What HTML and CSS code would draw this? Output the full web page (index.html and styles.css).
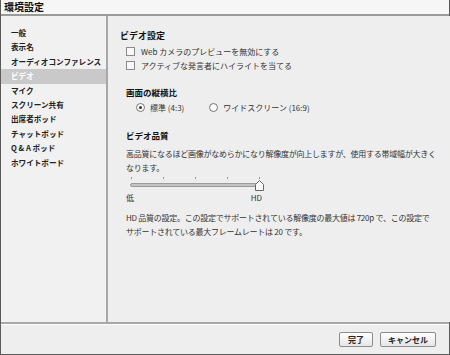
FILE: index.html
```html
<!DOCTYPE html>
<html lang="ja">
<head>
    <meta charset="UTF-8" />
    <link rel="stylesheet" href="styles.css">
</head>
<body>
    <div class="window">
        <div class="titlebar">環境設定</div>

        <div class="main">
            <ul class="sidebar">
                <li>一般</li>
                <li>表示名</li>
                <li>オーディオコンファレンス</li>
                <li class="selected">ビデオ</li>
                <li>マイク</li>
                <li>スクリーン共有</li>
                <li>出席者ポッド</li>
                <li>チャットポッド</li>
                <li>Q &amp; A ポッド</li>
                <li>ホワイトボード</li>
            </ul>

            <div class="content">
                <h2 class="heading">ビデオ設定</h2>
                <div class="section">
                    <label class="option"><span class="check"></span>Web カメラのプレビューを無効にする</label>
                    <label class="option"><span class="check"></span>アクティブな発言者にハイライトを当てる</label>
                </div>

                <div class="section gap">
                    <h3 class="subheading">画面の縦横比</h3>
                    <div class="radio-row">
                        <label class="option"><span class="radio on"></span>標準 (4:3)</label>
                        <label class="option"><span class="radio"></span>ワイドスクリーン (16:9)</label>
                    </div>
                </div>

                <div class="section gap wide">
                    <h3 class="subheading">ビデオ品質</h3>
                    <p class="desc">高品質になるほど画像がなめらかになり解像度が向上しますが、使用する帯域幅が大きくなります。</p>

                    <div class="slider">
                        <div class="ticks">
                            <span></span><span></span><span></span><span></span><span></span>
                        </div>
                        <div class="track"></div>
                        <svg class="thumb" width="9" height="11" viewBox="0 0 9 11">
                            <path d="M0.5 10.5 V4.5 L4.5 0.5 L8.5 4.5 V10.5 Z" fill="#fafafa" stroke="#666" />
                        </svg>
                        <div class="slider-labels">
                            <span>低</span><span>HD</span>
                        </div>
                    </div>

                    <p class="desc note">HD 品質の設定。この設定でサポートされている解像度の最大値は 720p で、この設定でサポートされている最大フレームレートは 20 です。</p>
                </div>
            </div>
        </div>

        <div class="footer">
            <button class="btn ok">完了</button>
            <button class="btn cancel">キャンセル</button>
        </div>
    </div>
</body>
</html>
```

FILE: styles.css
```css
html, body {
    margin: 0;
    padding: 0;
}
body {
    font-family: "Noto Sans CJK JP", "Liberation Sans", sans-serif;
    font-size: 8px;
    color: #333333;
    background: #eeeeee;
}

.window {
    width: 450px;
    height: 355px;
    box-sizing: border-box;
    border-left: 1px solid #5a5a5a;
    border-right: 1px solid #5a5a5a;
    border-bottom: 1px solid #5a5a5a;
    display: flex;
    flex-direction: column;
    background: #eeeeee;
}

.titlebar {
    height: 14px;
    line-height: 14px;
    padding-left: 3px;
    font-size: 10px;
    font-weight: bold;
    color: #111111;
    background: #f6f6f6;
    border-bottom: 2px solid #9a9a9a;
    box-shadow: 0 1px 0 #ffffff;
}

.main {
    flex: 1;
    display: flex;
    min-height: 0;
}

.sidebar {
    flex: none;
    list-style: none;
    margin: 0;
    padding: 10px 0 0 0;
    width: 105px;
    background: #f1f1f1;
    border-right: 2px solid #a8a8a8;
    box-shadow: 1px 0 0 #ffffff;
}
.sidebar li {
    height: 14.4px;
    line-height: 14.4px;
    padding-left: 10px;
    font-size: 7.6px;
    font-weight: bold;
    color: #222222;
    white-space: nowrap;
}
.sidebar li.selected {
    background: #c9c9c9;
    color: #ffffff;
}

.content {
    flex: 1;
    padding: 14px 12px 0 12px;
    background: #eeeeee;
}

.heading {
    margin: 0;
    font-size: 9px;
    line-height: 12px;
    font-weight: bold;
    color: #111111;
}
.section {
    margin-left: 6px;
}
.section.gap {
    margin-top: 14px;
}
.section.wide {
    margin-top: 15px;
}
.subheading {
    margin: 0;
    font-size: 8.5px;
    line-height: 12px;
    font-weight: bold;
    color: #111111;
}

.option {
    display: flex;
    align-items: center;
    height: 14px;
    white-space: nowrap;
}
.section > .option:first-child {
    margin-top: 2px;
}

.check {
    width: 7px;
    height: 7px;
    border: 1px solid #8a8a8a;
    background: #f8f8f8;
    margin-right: 6px;
}

.radio-row {
    display: flex;
    gap: 25px;
    margin-top: 2px;
    padding-left: 10px;
}
.radio {
    position: relative;
    width: 7px;
    height: 7px;
    border: 1px solid #777777;
    border-radius: 50%;
    background: #fafafa;
    margin-right: 5px;
}
.radio.on::after {
    content: "";
    position: absolute;
    top: 2px;
    left: 2px;
    width: 3px;
    height: 3px;
    border-radius: 50%;
    background: #333333;
}

.desc {
    margin: 6px 0 0 0;
    line-height: 13.5px;
    width: 314px;
    letter-spacing: -0.25px;
}
.desc.note {
    margin-top: 7px;
    width: 307px;
}

.slider {
    position: relative;
    width: 136px;
    margin-top: 3px;
}
.ticks {
    display: flex;
    justify-content: space-between;
    width: 129px;
    margin-left: 5px;
    height: 4px;
}
.ticks span {
    width: 1px;
    height: 2px;
    background: #999999;
}
.track {
    margin: 2px 0 0 4px;
    width: 128px;
    height: 2px;
    border: 1px solid #9a9a9a;
    border-radius: 2px;
    background: #c4c4c4;
}
.thumb {
    position: absolute;
    left: 129px;
    top: 3px;
}
.slider-labels {
    display: flex;
    justify-content: space-between;
    margin-top: 5px;
    line-height: 12px;
}

.footer {
    height: 32px;
    border-top: 2px solid #a8a8a8;
    box-shadow: inset 0 1px 0 #ffffff;
    display: flex;
    justify-content: flex-end;
    align-items: flex-start;
    gap: 7px;
    padding: 8px 13px 0 0;
    box-sizing: border-box;
    background: #eeeeee;
}
.btn {
    font-family: inherit;
    font-size: 8px;
    font-weight: bold;
    color: #222222;
    height: 15px;
    padding: 0;
    line-height: 13px;
    white-space: nowrap;
    border: 1px solid #8c8c8c;
    border-radius: 2px;
    background: linear-gradient(#ffffff, #e6e6e6);
}
.btn.ok {
    width: 34px;
}
.btn.cancel {
    width: 56px;
}
```
